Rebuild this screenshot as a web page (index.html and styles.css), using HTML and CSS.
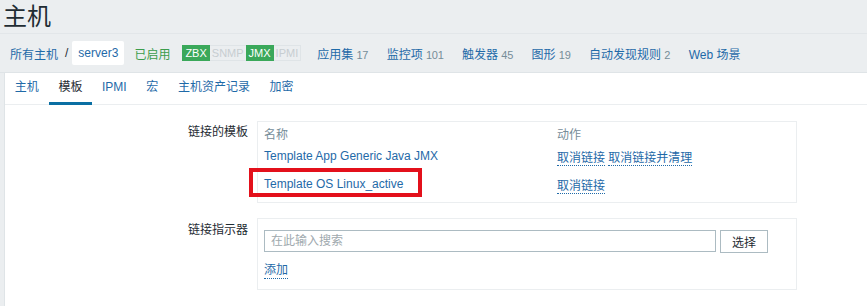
FILE: index.html
```html
<!DOCTYPE html>
<html lang="zh-CN">
<head>
    <meta charset="UTF-8">
    <title>主机</title>
    <link rel="stylesheet" href="styles.css">
</head>
<body>
    <header class="page-title">
        <h1>主机</h1>
    </header>

    <nav class="host-nav">
        <a class="crumb" href="#">所有主机</a>
        <span class="crumb-sep">/</span>
        <span class="crumb-current">server3</span>
        <span class="status-on">已启用</span>
        <span class="availability">
            <span class="tag tag-on">ZBX</span><span class="tag tag-off">SNMP</span><span class="tag tag-on">JMX</span><span class="tag tag-off tag-last">IPMI</span>
        </span>
        <a class="nav-link" href="#">应用集 <span class="count">17</span></a>
        <a class="nav-link" href="#">监控项 <span class="count">101</span></a>
        <a class="nav-link" href="#">触发器 <span class="count">45</span></a>
        <a class="nav-link" href="#">图形 <span class="count">19</span></a>
        <a class="nav-link" href="#">自动发现规则 <span class="count">2</span></a>
        <a class="nav-link" href="#">Web 场景</a>
    </nav>

    <main class="tab-panel">
        <ul class="tabs">
            <li><a href="#">主机</a></li>
            <li class="active"><a href="#">模板</a></li>
            <li><a href="#">IPMI</a></li>
            <li><a href="#">宏</a></li>
            <li><a href="#">主机资产记录</a></li>
            <li><a href="#">加密</a></li>
        </ul>

        <div class="form-grid">
            <label class="form-label">链接的模板</label>
            <div class="form-box">
                <table class="linked-table">
                    <thead>
                        <tr><th class="col-name">名称</th><th>动作</th></tr>
                    </thead>
                    <tbody>
                        <tr class="row-first">
                            <td><a href="#">Template App Generic Java JMX</a></td>
                            <td><a class="dotted" href="#">取消链接</a> <a class="dotted" href="#">取消链接并清理</a></td>
                        </tr>
                        <tr class="row-second">
                            <td><span class="marked"><a href="#">Template OS Linux_active</a></span></td>
                            <td><a class="dotted" href="#">取消链接</a></td>
                        </tr>
                    </tbody>
                </table>
            </div>

            <label class="form-label label-second">链接指示器</label>
            <div class="form-box box-second">
                <div class="search-row">
                    <input class="search-input" type="text" placeholder="在此输入搜索">
                    <button class="select-btn">选择</button>
                </div>
                <a class="dotted add-link" href="#">添加</a>
            </div>
        </div>
    </main>
</body>
</html>
```

FILE: styles.css
```css
/* global */
* {
    margin: 0;
    padding: 0;
    box-sizing: border-box;
}

body {
    background: #ebeef0;
    font-family: "Liberation Sans", "Noto Sans CJK SC", sans-serif;
    font-size: 12px;
    color: #1f2c33;
    width: 867px;
    height: 306px;
    overflow: hidden;
}

a {
    color: #1f6aa8;
    text-decoration: none;
}

/* title */
.page-title {
    height: 34px;
    padding: 1px 3px 0;
    background: #ebeef0;
    border-bottom: 1px solid #e2e6e9;
}

.page-title h1 {
    font-size: 24px;
    font-weight: normal;
    line-height: 31px;
    color: #1f2c33;
}

/* host navigation */
.host-nav {
    display: flex;
    align-items: center;
    height: 39px;
    padding: 0 0 0 10px;
    background: #ebeef0;
    border-bottom: 1px solid #dfe4e7;
    white-space: nowrap;
}

.crumb-sep {
    margin: 0 4px 0 7px;
    color: #1f2c33;
}

.crumb-current {
    background: #fff;
    padding: 5px 6px;
    color: #1f6aa8;
    line-height: 14px;
    border-radius: 2px;
}

.status-on {
    margin-left: 10px;
    color: #3c9d4c;
}

.availability {
    display: flex;
    margin-left: 12px;
    margin-right: 16px;
    font-size: 11px;
    line-height: 16px;
}

.tag {
    padding: 0 3px;
}

.tag-on {
    background: #3aa85a;
    color: #fff;
}

.tag-off {
    color: #c7cdd1;
    border: 1px solid #dfe4e7;
    border-left: none;
    border-right: none;
    line-height: 14px;
    padding: 0 2px;
}

.tag-last {
    border-right: 1px solid #dfe4e7;
}

.nav-link {
    margin-right: 18.5px;
}

.count {
    color: #768d99;
    font-size: 11px;
    letter-spacing: -0.3px;
}

/* tab panel */
.tab-panel {
    margin-left: 4px;
    background: #fff;
    border-left: 1px solid #dfe4e7;
    min-height: 240px;
}

.tabs {
    display: flex;
    list-style: none;
    height: 32px;
    border-bottom: 1px solid #ebeef0;
}

.tabs li a {
    display: block;
    padding: 0 9.8px;
    line-height: 29px;
    border-bottom: 3px solid transparent;
}

.tabs li.active a {
    color: #1f2c33;
    border-bottom-color: #0a6fa3;
}

/* form */
.form-grid {
    display: grid;
    grid-template-columns: 243px 540px;
    column-gap: 9px;
    row-gap: 15px;
    padding-top: 16px;
}

.form-label {
    text-align: right;
    padding-top: 4px;
    line-height: 14px;
    color: #1f2c33;
}

.label-second {
    padding-top: 5px;
}

.form-box {
    border: 1px solid #ebeef0;
    padding: 0 6px 2px;
}

.linked-table {
    border-collapse: collapse;
    width: 100%;
}

.linked-table th {
    text-align: left;
    font-weight: normal;
    color: #768d99;
    height: 22px;
    padding-top: 1px;
}

.linked-table .col-name {
    width: 293px;
}

.linked-table td {
    vertical-align: middle;
    white-space: nowrap;
}

.row-first td {
    height: 24px;
}

.row-second td {
    height: 32px;
}

.dotted {
    border-bottom: 1px dotted #1f6aa8;
}

/* highlight marker */
.marked {
    position: relative;
}

.marked::after {
    content: "";
    box-sizing: border-box;
    position: absolute;
    left: -15px;
    top: -9px;
    width: 173px;
    height: 29px;
    border: 4px solid #e3101b;
}

/* search block */
.box-second {
    padding: 11px 6px 6px;
    height: 72px;
}

.search-row {
    display: flex;
    gap: 4px;
}

.search-input {
    width: 452px;
    height: 22px;
    border: 1px solid #acbbc2;
    padding: 0 6px;
    font-family: inherit;
    font-size: 12px;
}

.search-input::placeholder {
    color: #a0a9ae;
}

.select-btn {
    width: 48px;
    height: 23px;
    background: #fff;
    border: 1px solid #acbbc2;
    font-family: inherit;
    font-size: 12px;
    color: #1f2c33;
}

.add-link {
    display: inline-block;
    margin-top: 10px;
    line-height: 15px;
}
```
